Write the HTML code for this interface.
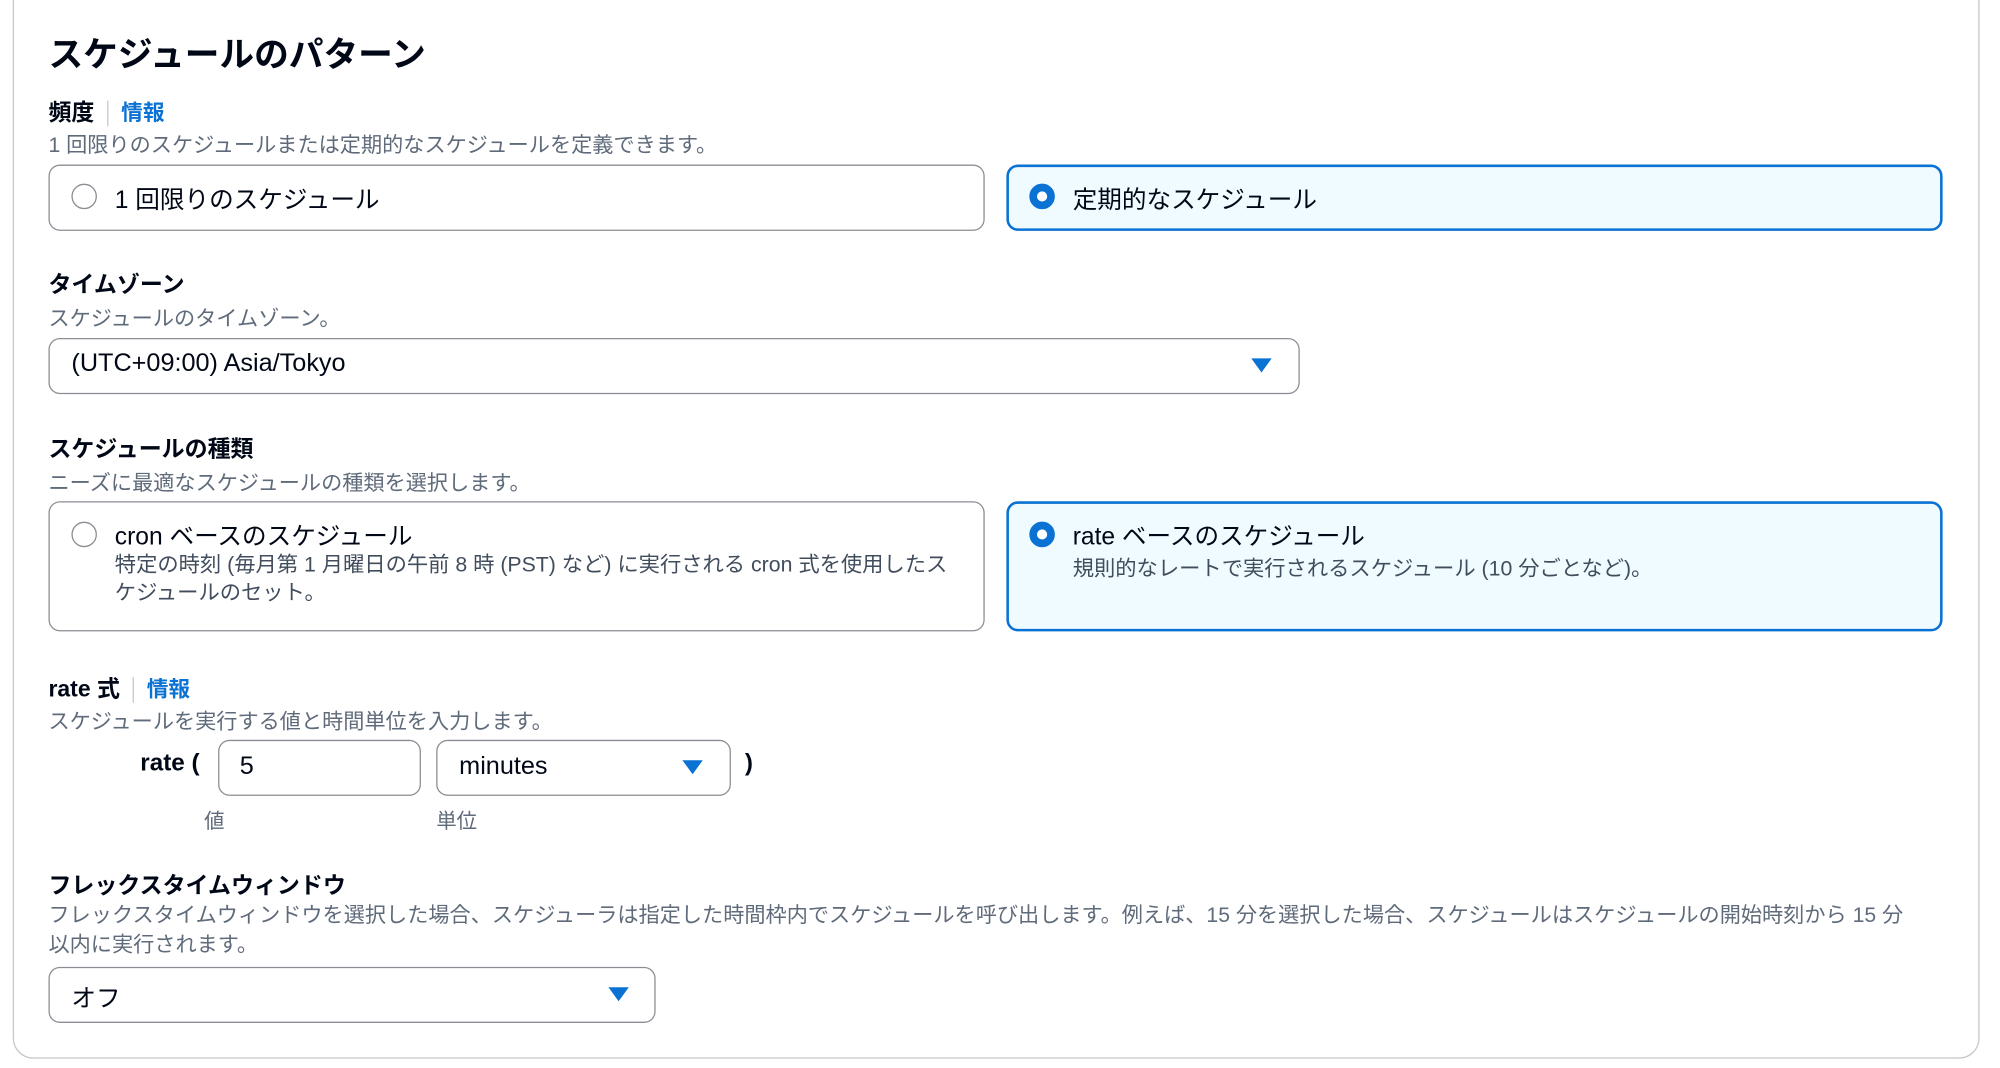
<!DOCTYPE html>
<html><head><meta charset="utf-8"><style>
html,body{margin:0;padding:0;background:#fff;width:2000px;height:1068px;overflow:hidden}
#s{position:absolute;left:0;top:0;width:1568px;height:837px;transform:scale(1.27551);transform-origin:0 0;font-family:"Liberation Sans","Noto Sans CJK JP",sans-serif;color:#000716}
.a{position:absolute;white-space:nowrap}
.card{position:absolute;left:10px;top:-20px;width:1540px;height:848px;border:1px solid #c6c6cd;border-radius:16px}
.h{font-size:18px;font-weight:bold}
.d{font-size:16.6px;color:#5f6b7a}
.b{position:absolute;border:1px solid #8c8c94;border-radius:9px;background:#fff;box-sizing:border-box}
.sel{border:2px solid #0972d3;background:#f0fbff}
.r{position:absolute;width:20px;height:20px;border:1.5px solid #8c8c94;border-radius:50%;box-sizing:border-box;background:#fff}
.rs{border:6px solid #0972d3}
.t{font-size:19.3px}
.tri{position:absolute;width:0;height:0;border-left:8px solid transparent;border-right:8px solid transparent;border-top:11px solid #0972d3}
.i{color:#0972d3;font-weight:bold;font-size:17px}
.sep{display:inline-block;width:1px;height:20px;background:#c6c6cd;vertical-align:middle;margin:0 10px}
</style></head><body><div id="s">
<div class="card"></div>
<div class="a" style="left:38px;top:20px;font-size:27.2px;font-weight:bold">スケジュールのパターン</div>

<div class="a h" style="left:38px;top:74px">頻度<span class="sep"></span><span class="i">情報</span></div>
<div class="a d" style="left:38px;top:100px">1 回限りのスケジュールまたは定期的なスケジュールを定義できます。</div>
<div class="b" style="left:38px;top:129px;width:734px;height:52px"></div>
<div class="r" style="left:56px;top:144px"></div>
<div class="a t" style="left:90px;top:141px">1 回限りのスケジュール</div>
<div class="b sel" style="left:789px;top:129px;width:734px;height:52px"></div>
<div class="r rs" style="left:807px;top:144px"></div>
<div class="a t" style="left:841px;top:141px">定期的なスケジュール</div>

<div class="a h" style="left:38px;top:209px">タイムゾーン</div>
<div class="a d" style="left:38px;top:236px">スケジュールのタイムゾーン。</div>
<div class="b" style="left:38px;top:265px;width:981px;height:44px"></div>
<div class="a" style="left:56px;top:274px;font-size:19.8px">(UTC+09:00) Asia/Tokyo</div>
<div class="tri" style="left:981px;top:281px"></div>

<div class="a h" style="left:38px;top:338px">スケジュールの種類</div>
<div class="a d" style="left:38px;top:365px">ニーズに最適なスケジュールの種類を選択します。</div>
<div class="b" style="left:38px;top:393px;width:734px;height:102px"></div>
<div class="r" style="left:56px;top:409px"></div>
<div class="a t" style="left:90px;top:405px">cron ベースのスケジュール</div>
<div class="a" style="left:90px;top:432px;font-size:16.7px;color:#414d5c;line-height:22px">特定の時刻 (毎月第 1 月曜日の午前 8 時 (PST) など) に実行される cron 式を使用したス<br>ケジュールのセット。</div>
<div class="b sel" style="left:789px;top:393px;width:734px;height:102px"></div>
<div class="r rs" style="left:807px;top:409px"></div>
<div class="a t" style="left:841px;top:405px">rate ベースのスケジュール</div>
<div class="a" style="left:841px;top:432px;font-size:16.7px;color:#414d5c">規則的なレートで実行されるスケジュール (10 分ごとなど)。</div>

<div class="a h" style="left:38px;top:526px">rate 式<span class="sep"></span><span class="i">情報</span></div>
<div class="a d" style="left:38px;top:552px">スケジュールを実行する値と時間単位を入力します。</div>
<div class="a" style="left:110px;top:588px;font-size:19px;font-weight:bold">rate (</div>
<div class="b" style="left:171px;top:580px;width:159px;height:44px"></div>
<div class="a" style="left:188px;top:590px;font-size:19.8px">5</div>
<div class="b" style="left:342px;top:580px;width:231px;height:44px"></div>
<div class="a" style="left:360px;top:590px;font-size:19.8px">minutes</div>
<div class="tri" style="left:535px;top:596px"></div>
<div class="a" style="left:584px;top:588px;font-size:19px;font-weight:bold">)</div>
<div class="a d" style="left:160px;top:630px;font-size:16px">値</div>
<div class="a d" style="left:342px;top:630px;font-size:16px">単位</div>

<div class="a h" style="left:38px;top:680px">フレックスタイムウィンドウ</div>
<div class="a d" style="left:38px;top:706px;line-height:23px">フレックスタイムウィンドウを選択した場合、スケジューラは指定した時間枠内でスケジュールを呼び出します。例えば、15 分を選択した場合、スケジュールはスケジュールの開始時刻から 15 分<br>以内に実行されます。</div>
<div class="b" style="left:38px;top:758px;width:476px;height:44px"></div>
<div class="a t" style="left:56px;top:767px">オフ</div>
<div class="tri" style="left:477px;top:774px"></div>
</div></body></html>
